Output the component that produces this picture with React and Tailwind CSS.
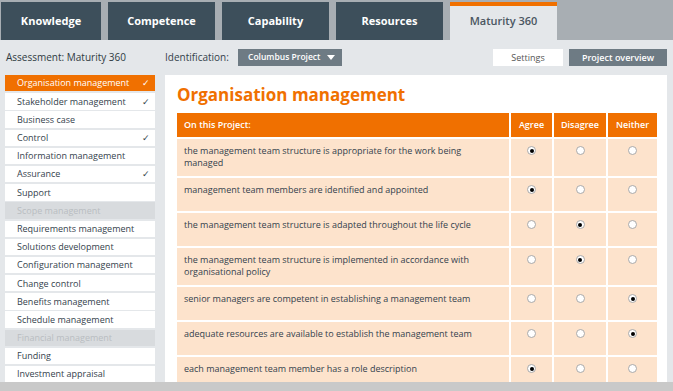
import React from 'react';

const tabs = ['Knowledge', 'Competence', 'Capability', 'Resources'];

const menu = [
  { label: 'Organisation management', done: true, active: true },
  { label: 'Stakeholder management', done: true },
  { label: 'Business case' },
  { label: 'Control', done: true },
  { label: 'Information management' },
  { label: 'Assurance', done: true },
  { label: 'Support' },
  { label: 'Scope management', group: true },
  { label: 'Requirements management' },
  { label: 'Solutions development' },
  { label: 'Configuration management' },
  { label: 'Change control' },
  { label: 'Benefits management' },
  { label: 'Schedule management' },
  { label: 'Financial management', group: true },
  { label: 'Funding' },
  { label: 'Investment appraisal' },
];

// answer: 0 agree, 1 disagree, 2 neither
const questions = [
  { text: 'the management team structure is appropriate for the work being managed', answer: 0, tall: true },
  { text: 'management team members are identified and appointed', answer: 0 },
  { text: 'the management team structure is adapted throughout the life cycle', answer: 1 },
  { text: 'the management team structure is implemented in accordance with organisational policy', answer: 1, tall: true },
  { text: 'senior managers are competent in establishing a management team', answer: 2 },
  { text: 'adequate resources are available to establish the management team', answer: 2 },
  { text: 'each management team member has a role description', answer: 0 },
];

function Radio({ checked }) {
  return (
    <span className="mt-[7px] flex h-[9px] w-[9px] items-center justify-center rounded-full border border-[#a9a9a9] bg-white">
      {checked && <span className="h-[4px] w-[4px] rounded-full bg-black" />}
    </span>
  );
}

export default function App() {
  return (
    <div
      className="flex h-[391px] w-[673px] flex-col overflow-hidden bg-[#e4e7ea] text-[#34424c]"
      style={{ fontFamily: '"Open Sans", sans-serif' }}
    >
      {/* tab bar */}
      <div className="flex h-[40px] shrink-0 items-end gap-[7px] bg-[#a8aeb3] pl-[1px]">
        {tabs.map((t, i) => (
          <div
            key={t}
            className={`flex h-[38px] items-center justify-center bg-[#3d4f5b] text-[11px] font-bold text-white ${i === 0 ? 'w-[100px]' : 'w-[107px]'}`}
          >
            {t}
          </div>
        ))}
        <div className="flex h-[38px] w-[107px] items-center justify-center border-t-[4px] border-[#f07000] bg-[#e4e7ea] pb-[3px] text-[11px] font-semibold text-[#4a5661]">
          Maturity 360
        </div>
      </div>

      {/* toolbar */}
      <div className="flex h-[35px] shrink-0 items-center pl-[6px] pr-[6px] text-[10px]">
        <div className="w-[159px] text-[#2f3a42]">Assessment: Maturity 360</div>
        <div className="w-[73px]">Identification:</div>
        <div className="flex h-[17px] w-[104px] items-center justify-between whitespace-nowrap bg-[#6e7b84] pl-[10px] pr-[7px] text-[8.5px] font-semibold text-white">
          Columbus Project
          <svg width="8" height="5" viewBox="0 0 8 5"><path d="M0 0h8L4 5z" fill="#fff" /></svg>
        </div>
        <div className="flex-1" />
        <div className="flex h-[17px] w-[70px] items-center justify-center bg-white text-[9px] text-[#555]">Settings</div>
        <div className="ml-[6px] flex h-[17px] w-[98px] items-center justify-center bg-[#6e7b84] text-[9px] font-semibold text-white">
          Project overview
        </div>
      </div>

      <div className="flex min-h-0 flex-1 pl-[5px]">
        {/* sidebar */}
        <div className="flex w-[150px] shrink-0 flex-col gap-[1.8px] text-[9px] font-medium">
          {menu.map((m) => (
            <div
              key={m.label}
              className={`flex h-[16.4px] shrink-0 items-center justify-between pl-[12px] pr-[5px] ${
                m.active ? 'bg-[#f07000] text-white' : m.group ? 'bg-[#d8dbde] text-[#b8bdc1]' : 'bg-white'
              }`}
            >
              <span>{m.label}</span>
              {m.done && <span className="text-[9px]">✓</span>}
            </div>
          ))}
        </div>

        {/* main panel */}
        <div className="ml-[10px] w-[502px] shrink-0 bg-white pl-[12px] pr-[10px] pt-[8px]">
          <h1 className="text-[17px] font-bold leading-[24px] text-[#f07000]">Organisation management</h1>
          <div className="mt-[6px] flex flex-col gap-[2px] text-[9px] font-medium">
            <div className="flex h-[24px] gap-[2px] bg-white font-semibold text-white">
              <div className="flex w-[332px] items-center bg-[#f07000] pl-[7px]">On this Project:</div>
              <div className="flex w-[41px] items-center justify-center bg-[#f07000]">Agree</div>
              <div className="flex w-[52px] items-center justify-center bg-[#f07000]">Disagree</div>
              <div className="flex w-[49px] items-center justify-center bg-[#f07000]">Neither</div>
            </div>
            {questions.map((q) => (
              <div key={q.text} className={`flex gap-[2px] ${q.tall ? 'h-[37px]' : 'h-[33px]'}`}>
                <div className="w-[332px] bg-[#fde3cc] pl-[7px] pr-[20px] pt-[6px] leading-[12px]">{q.text}</div>
                {[0, 1, 2].map((i) => (
                  <div
                    key={i}
                    className={`flex justify-center bg-[#fde3cc] ${i === 0 ? 'w-[41px]' : i === 1 ? 'w-[52px]' : 'w-[49px]'}`}
                  >
                    <Radio checked={q.answer === i} />
                  </div>
                ))}
              </div>
            ))}
          </div>
        </div>
      </div>

      {/* bottom strip */}
      <div className="h-[9px] shrink-0 bg-[#c9c9c9]" />
    </div>
  );
}
